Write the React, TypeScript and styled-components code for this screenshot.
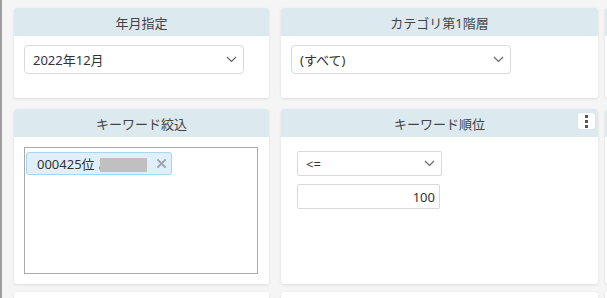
import React from "react";
import styled, { createGlobalStyle } from "styled-components";

const GlobalStyle = createGlobalStyle`
  html, body { margin: 0; padding: 0; background: #f5f5f5; overflow: hidden; }
  body { font-family: "Noto Sans", "Noto Sans CJK JP", sans-serif; color: #333; }
  * { box-sizing: border-box; }
`;

const Page = styled.div`
  border-left: 2px solid #9e9e9e;
  height: 298px;
  padding: 8px 0 0 12px;
  overflow: hidden;
`;

const Row = styled.div<{ $h: number; $mb: number }>`
  display: flex;
  height: ${(p) => p.$h}px;
  margin-bottom: ${(p) => p.$mb}px;
`;

const Card = styled.div<{ $w: number; $mr: number }>`
  flex: none;
  width: ${(p) => p.$w}px;
  margin-right: ${(p) => p.$mr}px;
  background: #fff;
  border-radius: 3px;
  box-shadow: 0 1px 3px rgba(0, 0, 0, 0.1);
  display: flex;
  flex-direction: column;
  overflow: hidden;
`;

const CardHeader = styled.div`
  position: relative;
  flex: none;
  height: 28px;
  background: #dce9ef;
  display: flex;
  align-items: center;
  justify-content: center;
  font-size: 13px;
  color: #444;
`;

const CardBody = styled.div<{ $pad: string }>`
  flex: 1;
  display: flex;
  flex-direction: column;
  align-items: flex-start;
  padding: ${(p) => p.$pad};
`;

const Select = styled.div<{ $w: number; $h: number; $r: number }>`
  width: ${(p) => p.$w}px;
  height: ${(p) => p.$h}px;
  border: 1px solid #d9d9d9;
  border-radius: ${(p) => p.$r}px;
  display: flex;
  align-items: center;
  justify-content: space-between;
  padding: 0 6px 0 8px;
  font-size: 13px;
  color: #333;
  background: #fff;
`;

const Input = styled.div`
  width: 143px;
  height: 25px;
  margin-top: 8px;
  border: 1px solid #d9d9d9;
  border-radius: 2px;
  display: flex;
  align-items: center;
  justify-content: flex-end;
  padding-right: 4px;
  font-size: 13px;
  color: #333;
`;

const TagBox = styled.div`
  align-self: stretch;
  flex: 1;
  border: 1px solid #aaa;
  padding: 4px 1px;
`;

const Tag = styled.div`
  position: relative;
  width: 146px;
  height: 23px;
  background: #e0f0fb;
  border: 1px solid #a9d5f2;
  border-radius: 3px;
  display: flex;
  align-items: center;
  padding: 0 5px 0 10px;
  font-size: 13px;
  color: #333;
`;

const Redact = styled.span`
  position: absolute;
  left: 73px;
  top: 5px;
  width: 47px;
  height: 14px;
  background: #c0c0c0;
`;

const Remove = styled.span`
  margin-left: auto;
  display: flex;
  align-items: center;
`;

const Kebab = styled.div`
  position: absolute;
  right: 3px;
  top: 4px;
  width: 17px;
  height: 16px;
  background: #fff;
  border-radius: 2px;
  box-shadow: 0 0 1px rgba(0, 0, 0, 0.15);
  display: flex;
  flex-direction: column;
  align-items: center;
  justify-content: center;
  gap: 2px;
`;

const Dot = styled.span`
  width: 3px;
  height: 3px;
  background: #555;
`;

const Chevron = () => (
  <svg width="11" height="7" viewBox="0 0 11 7">
    <path d="M1 1 L5.5 5.5 L10 1" fill="none" stroke="#666" strokeWidth="1.2" />
  </svg>
);

const Cross = () => (
  <svg width="9" height="9" viewBox="0 0 9 9">
    <path d="M1 1 L8 8 M8 1 L1 8" stroke="#9ea8b4" strokeWidth="2" strokeLinecap="square" />
  </svg>
);

export default function App() {
  return (
    <>
      <GlobalStyle />
      <Page>
        <Row $h={90} $mb={11}>
          <Card $w={255} $mr={12}>
            <CardHeader>年月指定</CardHeader>
            <CardBody $pad="9px 10px">
              <Select $w={220} $h={29} $r={4}>
                <span>2022年12月</span>
                <Chevron />
              </Select>
            </CardBody>
          </Card>
          <Card $w={317} $mr={7}>
            <CardHeader>カテゴリ第1階層</CardHeader>
            <CardBody $pad="9px 10px">
              <Select $w={220} $h={29} $r={4}>
                <span>(すべて)</span>
                <Chevron />
              </Select>
            </CardBody>
          </Card>
          <Card $w={300} $mr={0}>
            <CardHeader />
          </Card>
        </Row>
        <Row $h={175} $mb={8}>
          <Card $w={255} $mr={12}>
            <CardHeader>キーワード絞込</CardHeader>
            <CardBody $pad="10px 11px 10px 10px">
              <TagBox>
                <Tag>
                  <span>000425位 あ</span>
                  <Redact />
                  <Remove>
                    <Cross />
                  </Remove>
                </Tag>
              </TagBox>
            </CardBody>
          </Card>
          <Card $w={317} $mr={7}>
            <CardHeader>
              キーワード順位
              <Kebab>
                <Dot />
                <Dot />
                <Dot />
              </Kebab>
            </CardHeader>
            <CardBody $pad="14px 16px">
              <Select $w={145} $h={25} $r={2}>
                <span>&lt;=</span>
                <Chevron />
              </Select>
              <Input>100</Input>
            </CardBody>
          </Card>
          <Card $w={300} $mr={0}>
            <CardHeader />
          </Card>
        </Row>
        <Row $h={60} $mb={0}>
          <Card $w={255} $mr={12} />
          <Card $w={317} $mr={7} />
          <Card $w={300} $mr={0} />
        </Row>
      </Page>
    </>
  );
}
